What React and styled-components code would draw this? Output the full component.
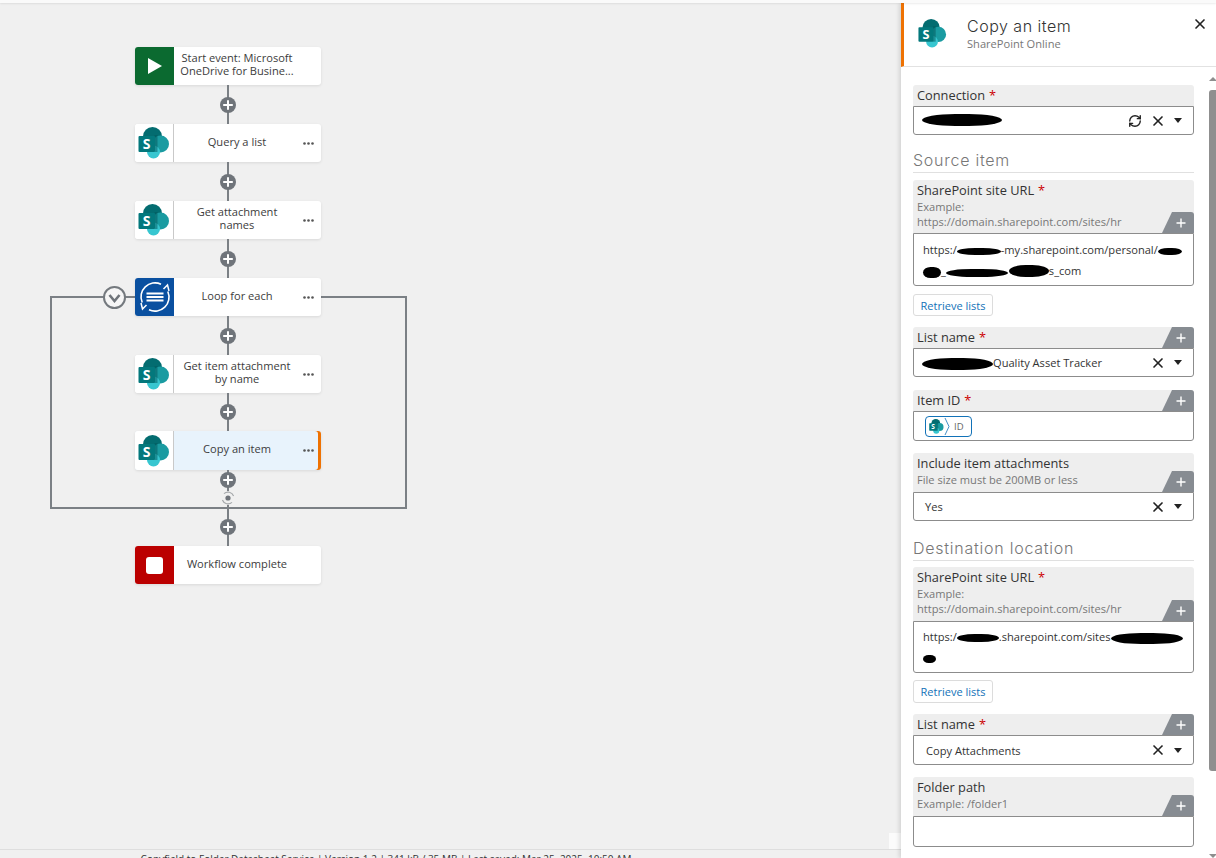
import React from 'react';
import styled, { createGlobalStyle } from 'styled-components';
import { X, RefreshCw } from 'lucide-react';

const GlobalStyle = createGlobalStyle`
  html, body {
    margin: 0;
    padding: 0;
    height: 100%;
    overflow: hidden;
    background: #f0f0f0;
    font-family: "Open Sans", "Liberation Sans", sans-serif;
    color: #333;
  }
  * { box-sizing: border-box; }
`;

const Page = styled.div`
  width: 1216px;
  height: 858px;
  display: flex;
  flex-direction: column;
  overflow: hidden;
`;

const TopBar = styled.div`
  flex: none;
  height: 3px;
  background: #fafafa;
  box-shadow: 0 1px 2px rgba(0, 0, 0, 0.08);
  position: relative;
  z-index: 3;
`;

const Main = styled.div`
  flex: 1;
  min-height: 0;
  display: flex;
`;

const Canvas = styled.div`
  width: 901px;
  flex: none;
  display: flex;
  flex-direction: column;
  position: relative;
`;

const Flow = styled.div`
  flex: 1;
  position: relative;
  padding: 44px 0 0 135px;
  display: flex;
  flex-direction: column;
  align-items: flex-start;
`;

const LoopFrame = styled.div`
  position: absolute;
  left: 50px;
  top: 293px;
  width: 357px;
  height: 213px;
  border: 2px solid #7b8085;
`;

const LoopToggle = styled.div`
  position: absolute;
  left: 103px;
  top: 283px;
  width: 23px;
  height: 23px;
  border-radius: 50%;
  border: 2px solid #74797e;
  background: #f6f6f6;
  display: flex;
  align-items: center;
  justify-content: center;
`;

const Node = styled.div`
  position: relative;
  z-index: 1;
  width: 186px;
  height: ${p => p.$h || 38}px;
  flex: none;
  display: flex;
  background: ${p => (p.$selected ? '#e8f3fc' : '#fff')};
  border-radius: 3px;
  box-shadow: 0 1px 3px rgba(0, 0, 0, 0.1)${p => (p.$selected ? ', inset -3px 0 0 #ee7203' : '')};
  overflow: hidden;
`;

const NodeIcon = styled.div`
  width: 39px;
  flex: none;
  display: flex;
  align-items: center;
  justify-content: center;
  background: ${p => p.$bg || '#fff'};
  border-right: ${p => (p.$bg ? 'none' : '1px solid #c9c9c9')};
`;

const StopSquare = styled.div`
  width: 17px;
  height: 17px;
  border-radius: 3px;
  background: #fff;
`;

const NodeLabel = styled.div`
  width: 116px;
  margin-left: 5px;
  padding-bottom: 4px;
  flex: none;
  display: flex;
  align-items: center;
  justify-content: center;
  text-align: center;
  font-size: 11.1px;
  line-height: 13px;
  color: #3c3c3c;
`;

const NodeMenu = styled.div`
  flex: 1;
  display: flex;
  align-items: center;
  justify-content: center;
`;

const Connector = styled.div`
  position: relative;
  width: 186px;
  height: ${p => p.$h || 39}px;
  flex: none;
  display: flex;
  flex-direction: column;
  align-items: center;
  justify-content: ${p => (p.$top ? 'flex-start' : 'center')};
  padding-top: ${p => (p.$top ? 2 : 0)}px;
  gap: 3px;
  z-index: 1;

  &::before {
    content: '';
    position: absolute;
    top: 0;
    bottom: 0;
    left: 92px;
    width: 2px;
    background: #7b8085;
  }
`;

const PlusButton = styled.svg`
  position: relative;
  width: 16px;
  height: 16px;
  flex: none;
`;

const LoopEnd = styled.svg`
  position: relative;
  width: 14px;
  height: 14px;
  flex: none;
  background: #f0f0f0;
  border-radius: 50%;
`;

const StatusBar = styled.div`
  flex: none;
  height: 9px;
  padding-top: 3px;
  overflow: hidden;
  text-align: center;
  width: 772px;
  margin-right: auto;
  font-size: 10px;
  line-height: 14px;
  white-space: nowrap;
  color: #333;
`;

const StatusRule = styled.div`
  position: absolute;
  left: 0;
  right: 0;
  bottom: 8px;
  height: 1px;
  background: #dedede;
`;

const CornerPatch = styled.div`
  position: absolute;
  right: 0;
  bottom: 9px;
  width: 12px;
  height: 16px;
  background: #fbfbfb;
`;

const Panel = styled.div`
  flex: 1;
  min-width: 0;
  background: #fff;
  display: flex;
  flex-direction: column;
  box-shadow: -2px 0 4px rgba(0, 0, 0, 0.12);
  position: relative;
  z-index: 2;
`;

const PanelHeader = styled.div`
  flex: none;
  height: 64px;
  display: flex;
  align-items: flex-start;
  border-left: 3px solid #ee7203;
  border-bottom: 1px solid #e2e2e2;
  padding: 16px 8px 0 14px;
`;

const HeaderText = styled.div`
  margin: -2px 0 0 20px;
  flex: 1;
`;

const PanelTitle = styled.div`
  font-family: Inter, "Liberation Sans", sans-serif;
  font-weight: 300;
  font-size: 16px;
  line-height: 18px;
  letter-spacing: 0.5px;
  color: #333;
`;

const PanelSubtitle = styled.div`
  font-size: 11.1px;
  line-height: 14px;
  margin-top: 2px;
  color: #777;
`;

const CloseButton = styled.div`
  margin-top: -3px;
  display: flex;
  color: #222;
`;

const PanelBody = styled.div`
  flex: 1;
  min-height: 0;
  display: flex;
  overflow: hidden;
`;

const Fields = styled.div`
  width: 281px;
  margin-left: 12px;
  padding-top: 18px;
  flex: none;
`;

const ScrollTrack = styled.div`
  width: 7px;
  margin-left: auto;
  padding-top: 10px;
  display: flex;
  flex-direction: column;
  align-items: center;
`;

const ScrollArrow = styled.div`
  width: 0;
  height: 0;
  flex: none;
  border-left: 4px solid transparent;
  border-right: 4px solid transparent;
  ${p => (p.$down ? 'border-top: 4px solid #8e8e8e; margin-top: auto;' : 'border-bottom: 4px solid #8e8e8e;')}
`;

const ScrollThumb = styled.div`
  width: 7px;
  height: 681px;
  margin-top: 9px;
  flex: none;
  background: #8f8f8f;
  border-radius: 3px 0 0 3px;
`;

const SectionTitle = styled.div`
  margin-top: ${p => p.$top}px;
  margin-bottom: ${p => p.$bottom}px;
  height: 24px;
  border-bottom: 1px solid #e0e0e0;
  font-family: Inter, "Liberation Sans", sans-serif;
  font-weight: 300;
  font-size: 16px;
  line-height: 23px;
  letter-spacing: 0.75px;
  color: #777;
`;

const Field = styled.div`
  margin-top: ${p => p.$top || 0}px;
`;

const FieldHead = styled.div`
  display: flex;
  justify-content: space-between;
  align-items: flex-end;
  background: #eee;
  border-radius: 3px 3px 0 0;
  min-height: 21px;
`;

const HeadText = styled.div`
  align-self: flex-start;
  padding: 2px 0 ${p => p.$pad || 0}px 4px;
  min-width: 0;
`;

const FieldName = styled.div`
  font-size: 12.8px;
  line-height: 17px;
  color: #333;
`;

const Required = styled.span`
  color: #c00;
  margin-left: 4px;
`;

const FieldHint = styled.div`
  font-size: 11.1px;
  line-height: 15px;
  color: #777;
`;

const AddTab = styled.div`
  flex: none;
  width: 32px;
  height: 21px;
  background: #878c92;
  color: #fff;
  clip-path: polygon(10px 0, 100% 0, 100% 100%, 0 100%);
  border-top-right-radius: 3px;
  display: flex;
  align-items: center;
  justify-content: center;
  padding-left: 5px;
`;

const InputBox = styled.div`
  height: ${p => p.$h || 29}px;
  display: flex;
  align-items: center;
  padding: ${p => (p.$chip ? '0 0 0 11px' : '0 0 0 8px')};
  border: 1px solid #8c8c8c;
  border-radius: 0 0 3px 3px;
  background: #fff;
  font-size: 11.1px;
  color: #333;
`;

const InputText = styled.div`
  flex: 1;
  min-width: 0;
  padding-left: ${p => p.$inset || 0}px;
  white-space: nowrap;
`;

const InputActions = styled.div`
  display: flex;
  align-items: center;
  flex: none;
  gap: 8px;
  margin-right: 11px;
  color: #222;
`;

const Caret = styled.div`
  width: 0;
  height: 0;
  border-left: 4px solid transparent;
  border-right: 4px solid transparent;
  border-top: 5px solid #222;
`;

const UrlBox = styled.div`
  height: ${p => p.$h}px;
  padding: ${p => p.$pad}px 0 0 9px;
  border: 1px solid #8c8c8c;
  border-radius: 0 0 3px 3px;
  background: #fff;
  font-size: 11.1px;
  line-height: 21px;
  color: #333;
  white-space: nowrap;
  overflow: hidden;
`;

// redaction strokes from the original screenshot
const Blot = styled.span`
  display: inline-block;
  width: ${p => p.$w}px;
  height: ${p => p.$h}px;
  margin-left: ${p => p.$ml || 0}px;
  background: #000;
  border-radius: 50% / 60%;
  vertical-align: ${p => p.$v || -1}px;
`;

const RetrieveButton = styled.button`
  display: block;
  margin-top: ${p => p.$top}px;
  width: 80px;
  height: ${p => p.$h}px;
  padding: 0;
  background: #fff;
  border: 1px solid #dcdcdc;
  border-radius: 3px;
  font-family: inherit;
  font-size: 11px;
  color: #1272b8;
`;

const TokenChip = styled.div`
  display: flex;
  align-items: center;
  height: 21px;
  width: 47px;
  border: 1px solid #1272b8;
  border-radius: 4px;
  padding-left: 3px;
  font-size: 9.5px;
  color: #666;
`;

const TokenName = styled.span`
  margin-left: 4px;
`;

const SharePointIcon = ({ size = 32 }) => (
  <svg width={size} height={size} viewBox="0 0 32 32">
    <circle cx="14.5" cy="9.5" r="9.5" fill="#036c70" />
    <circle cx="22.5" cy="17" r="8.5" fill="#1a9ba1" />
    <circle cx="15.5" cy="25" r="6.5" fill="#37c6d0" />
    <rect x="16.5" y="8" width="3" height="17" fill="#02565a" opacity="0.5" />
    <rect x="0.5" y="9" width="16.5" height="16" rx="1" fill="#03787c" />
    <text x="8.7" y="21.8" textAnchor="middle" fontFamily="Open Sans, sans-serif" fontWeight="700" fontSize="14" fill="#fff">S</text>
  </svg>
);

const PlayIcon = () => (
  <svg width="16" height="18" viewBox="0 0 16 18">
    <path d="M1 1 L15 9 L1 17 Z" fill="#fff" />
  </svg>
);

const LoopIcon = () => (
  <svg width="36" height="36" viewBox="0 0 36 36" fill="none" stroke="#fff" strokeWidth="1.6">
    <path d="M24 5.2 A14 14 0 0 0 5.2 23.5" />
    <path d="M12 30.8 A14 14 0 0 0 30.8 12.5" />
    <path d="M26.5 10 L30.5 6 L32 12" strokeWidth="1.5" />
    <path d="M9.5 26 L5.5 30 L4 24" strokeWidth="1.5" />
    <path d="M9.5 14.5 H26.5 M9.5 18 H26.5 M9.5 21.5 H26.5" strokeWidth="2" />
  </svg>
);

const Dots = () => (
  <svg width="11" height="3" viewBox="0 0 11 3" fill="#555">
    <circle cx="1.5" cy="1.5" r="1.3" />
    <circle cx="5.5" cy="1.5" r="1.3" />
    <circle cx="9.5" cy="1.5" r="1.3" />
  </svg>
);

const Plus = () => (
  <PlusButton viewBox="0 0 16 16">
    <circle cx="8" cy="8" r="8" fill="#6f747a" />
    <path d="M8 3.2 V12.8 M3.2 8 H12.8" stroke="#fff" strokeWidth="2" />
  </PlusButton>
);

const LoopTarget = () => (
  <LoopEnd viewBox="0 0 14 14" fill="none">
    <path d="M12.6 5 A6 6 0 0 0 3 2.6" stroke="#a5a8ab" strokeWidth="1.2" />
    <path d="M1.4 9 A6 6 0 0 0 11 11.4" stroke="#a5a8ab" strokeWidth="1.2" />
    <circle cx="7" cy="7" r="2.6" fill="#6f747a" />
  </LoopEnd>
);

const SmallPlus = () => (
  <svg width="10" height="10" viewBox="0 0 10 10">
    <path d="M5 0.5 V9.5 M0.5 5 H9.5" stroke="#fff" strokeWidth="1.4" />
  </svg>
);

const ClearAndOpen = ({ refresh }) => (
  <InputActions>
    {refresh && <RefreshCw size={14} strokeWidth={2.4} />}
    <X size={16} strokeWidth={2.5} />
    <Caret />
  </InputActions>
);

const FlowNode = ({ label, icon, bg, selected, menu = true, h }) => (
  <Node $selected={selected} $h={h}>
    <NodeIcon $bg={bg}>{icon}</NodeIcon>
    <NodeLabel>{label}</NodeLabel>
    <NodeMenu>{menu && <Dots />}</NodeMenu>
  </Node>
);

const FormField = ({ name, required, hint, pad, add = true, top, children }) => (
  <Field $top={top}>
    <FieldHead>
      <HeadText $pad={pad}>
        <FieldName>{name}{required && <Required>*</Required>}</FieldName>
        {hint && hint.map(h => <FieldHint key={h}>{h}</FieldHint>)}
      </HeadText>
      {add && <AddTab><SmallPlus /></AddTab>}
    </FieldHead>
    {children}
  </Field>
);

const EXAMPLE_URL = ['Example:', 'https://domain.sharepoint.com/sites/hr'];

const App = () => {
  return (
    <Page>
      <GlobalStyle />
      <TopBar />
      <Main>
        <Canvas>
          <Flow>
            <LoopFrame />
            <LoopToggle>
              <svg width="13" height="10" viewBox="0 0 13 10" fill="none">
                <path d="M1.5 2 L6.5 8 L11.5 2" stroke="#6f747a" strokeWidth="2.6" />
              </svg>
            </LoopToggle>
            <FlowNode label="Start event: Microsoft OneDrive for Busine..." icon={<PlayIcon />} bg="#0b6a30" menu={false} />
            <Connector><Plus /></Connector>
            <FlowNode label="Query a list" icon={<SharePointIcon />} />
            <Connector><Plus /></Connector>
            <FlowNode label="Get attachment names" icon={<SharePointIcon />} />
            <Connector><Plus /></Connector>
            <FlowNode label="Loop for each" icon={<LoopIcon />} bg="#0a50a0" />
            <Connector $h={39}><Plus /></Connector>
            <FlowNode label="Get item attachment by name" icon={<SharePointIcon />} />
            <Connector $h={38}><Plus /></Connector>
            <FlowNode label="Copy an item" icon={<SharePointIcon />} selected h={39} />
            <Connector $h={38} $top><Plus /><LoopTarget /></Connector>
            <Connector $h={38}><Plus /></Connector>
            <FlowNode label="Workflow complete" icon={<StopSquare />} bg="#bb0000" menu={false} />
          </Flow>
          <StatusRule />
          <CornerPatch />
          <StatusBar>Copyfield to Folder Datasheet Service | Version 1.2 | 341 kB / 35 MB | Last saved: Mar 25, 2025, 10:50 AM</StatusBar>
        </Canvas>
        <Panel>
          <PanelHeader>
            <SharePointIcon size={29} />
            <HeaderText>
              <PanelTitle>Copy an item</PanelTitle>
              <PanelSubtitle>SharePoint Online</PanelSubtitle>
            </HeaderText>
            <CloseButton><X size={16} strokeWidth={2.5} /></CloseButton>
          </PanelHeader>
          <PanelBody>
            <Fields>
              <FormField name="Connection" required add={false}>
                <InputBox>
                  <InputText><Blot $w={80} $h={12} /></InputText>
                  <ClearAndOpen refresh />
                </InputBox>
              </FormField>

              <SectionTitle $top={14} $bottom={7}>Source item</SectionTitle>

              <FormField name="SharePoint site URL" required hint={EXAMPLE_URL} pad={4}>
                <UrlBox $h={53} $pad={5}>
                  https:/<Blot $w={44} $h={7} />-my.sharepoint.com/personal/<Blot $w={24} $h={7} />
                  <br />
                  <Blot $w={18} $h={11} $v={-3} />_<Blot $w={62} $h={8} $v={-2} /><Blot $w={40} $h={12} $ml={1} $v={-2} />s_com
                </UrlBox>
              </FormField>

              <RetrieveButton $top={8} $h={22}>Retrieve lists</RetrieveButton>

              <FormField name="List name" required top={11}>
                <InputBox>
                  <InputText><Blot $w={71} $h={12} $v={-3} />Quality Asset Tracker</InputText>
                  <ClearAndOpen />
                </InputBox>
              </FormField>

              <FormField name="Item ID" required top={13}>
                <InputBox $h={30} $chip>
                  <TokenChip>
                    <SharePointIcon size={15} />
                    <svg width="6" height="19" viewBox="0 0 6 19" fill="none">
                      <path d="M1 1 L5 9.5 L1 18" stroke="#1272b8" strokeWidth="0.8" />
                    </svg>
                    <TokenName>ID</TokenName>
                  </TokenChip>
                </InputBox>
              </FormField>

              <FormField name="Include item attachments" hint={['File size must be 200MB or less']} pad={5} top={12}>
                <InputBox>
                  <InputText $inset={3}>Yes</InputText>
                  <ClearAndOpen />
                </InputBox>
              </FormField>

              <SectionTitle $top={16} $bottom={6}>Destination location</SectionTitle>

              <FormField name="SharePoint site URL" required hint={EXAMPLE_URL} pad={5}>
                <UrlBox $h={52} $pad={4}>
                  https:/<Blot $w={42} $h={8} />.sharepoint.com/sites<Blot $w={72} $h={11} $v={-3} />
                  <br />
                  <Blot $w={13} $h={8} />
                </UrlBox>
              </FormField>

              <RetrieveButton $top={7} $h={23}>Retrieve lists</RetrieveButton>

              <FormField name="List name" required top={11}>
                <InputBox $h={30}>
                  <InputText $inset={4}>Copy Attachments</InputText>
                  <ClearAndOpen />
                </InputBox>
              </FormField>

              <FormField name="Folder path" hint={['Example: /folder1']} pad={5} top={12}>
                <InputBox $h={31} />
              </FormField>
            </Fields>
            <ScrollTrack>
              <ScrollArrow />
              <ScrollThumb />
              <ScrollArrow $down />
            </ScrollTrack>
          </PanelBody>
        </Panel>
      </Main>
    </Page>
  );
};

export default App;
